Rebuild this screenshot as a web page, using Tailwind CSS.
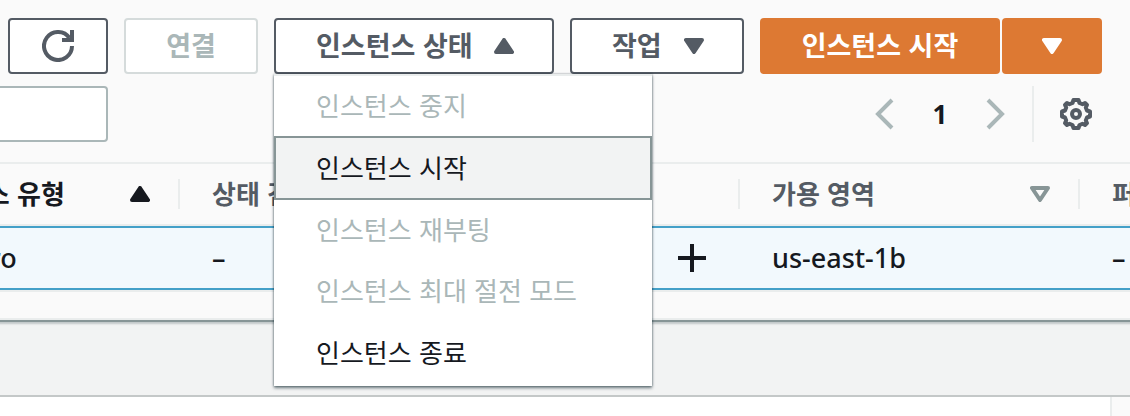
<!DOCTYPE html>
<html lang="ko">
<head>
<meta charset="utf-8">
<meta name="viewport" content="width=device-width, initial-scale=1">
<title>인스턴스</title>
<script src="https://cdn.jsdelivr.net/npm/@tailwindcss/browser@4"></script>
</head>
<body class="min-h-screen flex flex-col overflow-x-hidden bg-white font-['Noto_Sans_CJK_KR',sans-serif] text-[26px] leading-9 text-[#16191f]">
<main class="bg-[#fafafa] border-b-2 border-[#879596] shadow-[0_1px_2px_rgba(0,28,36,0.3)]">
  <div class="flex justify-end gap-4 pt-[18px] pr-7 text-[27px] font-bold text-[#545b64]">
    <button type="button" aria-label="새로 고침" class="flex h-14 w-[100px] shrink-0 items-center justify-center rounded-sm border-2 border-[#545b64] bg-white">
      <svg class="size-8" viewBox="0 0 32 32" fill="none" stroke="currentColor" stroke-width="4" aria-hidden="true"><path d="M30 16A14 14 0 1 1 27.500 8"/><path d="M30 0V10H20"/></svg>
    </button>
    <button type="button" disabled class="h-14 w-[134px] shrink-0 rounded-sm border-2 border-[#d5dbdb] bg-white pb-0.5 text-[#aab7b8]">연결</button>
    <div class="relative shrink-0">
      <button type="button" aria-haspopup="menu" aria-expanded="true" class="flex h-14 w-[280px] items-center justify-between rounded-sm border-2 border-[#545b64] bg-white pl-10 pr-[38px]">
        <span class="pb-0.5">인스턴스 상태</span>
        <svg class="h-4 w-5" viewBox="0 0 20 16" fill="currentColor" stroke="currentColor" stroke-width="4" stroke-linejoin="round" aria-hidden="true"><path d="M10 2L18 14H2Z"/></svg>
      </button>
      <div role="menu" class="absolute left-0 top-full z-10 flex w-[378px] flex-col border-t-2 border-[#eaeded] bg-white pb-0.5 text-[26px] font-normal text-[#16191f] shadow-[0_2px_3px_rgba(0,28,36,0.55),0_0_2px_rgba(0,28,36,0.4)]">
        <button type="button" role="menuitem" disabled class="h-[60px] px-[42px] pb-0.5 text-left text-[#aab7b8]">인스턴스 중지</button>
        <button type="button" role="menuitem" class="h-16 border-2 border-[#879596] bg-[#f2f3f3] px-10 pb-0.5 text-left">인스턴스 시작</button>
        <button type="button" role="menuitem" disabled class="h-[60px] px-[42px] pb-0.5 text-left text-[#aab7b8]">인스턴스 재부팅</button>
        <button type="button" role="menuitem" disabled class="h-[62px] px-[42px] pb-0.5 text-left text-[#aab7b8]">인스턴스 최대 절전 모드</button>
        <button type="button" role="menuitem" class="h-[62px] px-[42px] pb-0.5 text-left">인스턴스 종료</button>
      </div>
    </div>
    <button type="button" aria-haspopup="menu" class="flex h-14 w-[174px] shrink-0 items-center justify-between rounded-sm border-2 border-[#545b64] bg-white pl-10 pr-[38px]">
      <span class="pb-0.5">작업</span>
      <svg class="h-4 w-5" viewBox="0 0 20 16" fill="currentColor" stroke="currentColor" stroke-width="4" stroke-linejoin="round" aria-hidden="true"><path d="M2 2H18L10 14Z"/></svg>
    </button>
    <div class="flex shrink-0 gap-0.5 text-white">
      <button type="button" class="h-14 w-60 rounded-sm bg-[#dd7933] pb-0.5">인스턴스 시작</button>
      <button type="button" aria-label="시작 옵션" class="flex h-14 w-[100px] items-center justify-center rounded-sm bg-[#dd7933]">
        <svg class="h-4 w-5" viewBox="0 0 20 16" fill="currentColor" stroke="currentColor" stroke-width="4" stroke-linejoin="round" aria-hidden="true"><path d="M2 2H18L10 14Z"/></svg>
      </button>
    </div>
  </div>

  <div class="flex items-center justify-between pt-3 pb-5 pr-[38px]">
    <input type="text" aria-label="인스턴스 필터링" class="-ml-2 h-14 w-[116px] rounded-sm border-2 border-[#aab7b8] bg-white px-4">
    <nav aria-label="페이지" class="flex items-center">
      <button type="button" aria-label="이전 페이지" class="text-[#aab7b8]">
        <svg class="h-8 w-5" viewBox="0 0 20 32" fill="none" stroke="currentColor" stroke-width="4" aria-hidden="true"><path d="M18 2L4 16L18 30"/></svg>
      </button>
      <button type="button" aria-current="page" class="w-[92px] font-['Open_Sans',sans-serif] font-bold">1</button>
      <button type="button" aria-label="다음 페이지" class="text-[#aab7b8]">
        <svg class="h-8 w-5" viewBox="0 0 20 32" fill="none" stroke="currentColor" stroke-width="4" aria-hidden="true"><path d="M2 2L16 16L2 30"/></svg>
      </button>
      <div class="ml-[26px] flex h-14 items-center border-l-2 border-[#eaeded] pl-[26px]">
        <button type="button" aria-label="기본 설정" class="text-[#545b64]">
          <svg class="size-8" viewBox="0 0 32 32" fill="none" stroke="currentColor" stroke-width="4" aria-hidden="true"><path stroke-linejoin="round" d="M13.500 2H18.500L19.500 5L22.500 6.200L25 5L27 7L25.800 9.500L27 12.500L30 13.500V18.500L27 19.500L25.800 22.500L27 25L25 27L22.500 25.800L19.500 27L18.500 30H13.500L12.500 27L9.500 25.800L7 27L5 25L6.200 22.500L5 19.500L2 18.500V13.500L5 12.500L6.200 9.500L5 7L7 5L9.500 6.200L12.500 5Z"/><circle cx="16" cy="16" r="4"/></svg>
        </button>
      </div>
    </nav>
  </div>

  <div class="overflow-hidden border-y-2 border-[#eaeded]">
    <table class="-ml-[118px] w-[calc(100%+218px)] table-fixed border-separate border-spacing-0 text-left">
      <colgroup><col class="w-[298px]"><col class="w-[560px]"><col class="w-[340px]"><col></colgroup>
      <thead class="text-[#545b64]">
        <tr>
          <th scope="col" aria-sort="ascending" class="h-[62px] border-b-2 border-[#eaeded] p-0 font-bold text-[#16191f]">
            <div class="flex h-[30px] items-center justify-between border-r-2 border-[#eaeded] pl-8 pr-7"><span class="pb-0.5">인스턴스 유형</span>
              <svg class="h-4 w-5" viewBox="0 0 20 16" fill="currentColor" stroke="currentColor" stroke-width="4" stroke-linejoin="round" aria-hidden="true"><path d="M10 2L18 14H2Z"/></svg>
            </div>
          </th>
          <th scope="col" class="border-b-2 border-[#eaeded] p-0 font-bold"><div class="flex h-[30px] items-center border-r-2 border-[#eaeded] pl-8"><span class="pb-0.5">상태 검사</span></div></th>
          <th scope="col" class="border-b-2 border-[#eaeded] p-0 font-bold">
            <div class="flex h-[30px] items-center justify-between border-r-2 border-[#eaeded] pl-8 pr-7"><span class="pb-0.5">가용 영역</span>
              <svg class="h-4 w-5 text-[#879596]" viewBox="0 0 20 16" fill="none" stroke="currentColor" stroke-width="4" stroke-linejoin="round" aria-hidden="true"><path d="M2 2H18L10 14Z"/></svg>
            </div>
          </th>
          <th scope="col" class="border-b-2 border-[#eaeded] p-0 font-bold"><div class="flex h-[30px] items-center whitespace-nowrap pl-8"><span class="pb-0.5">퍼블릭 IPv4</span></div></th>
        </tr>
      </thead>
      <tbody class="font-['Noto_Sans',sans-serif] text-[27px] font-medium">
        <tr class="bg-[#f2f9fd]">
          <td class="h-16 border-y-2 border-[#44a0c8] p-0 pl-7">t2.micro</td>
          <td class="border-y-2 border-[#44a0c8] p-0 pl-8">
            <div class="flex items-center justify-between pr-[34px]">–
              <button type="button" aria-label="경보 추가"><svg class="size-7" viewBox="0 0 28 28" fill="none" stroke="currentColor" stroke-width="4" aria-hidden="true"><path d="M14 0V28M0 14H28"/></svg></button>
            </div>
          </td>
          <td class="border-y-2 border-[#44a0c8] p-0 pl-8">us-east-1b</td>
          <td class="border-y-2 border-[#44a0c8] p-0 pl-8">–</td>
        </tr>
      </tbody>
    </table>
    <div class="h-7 border-t-2 border-[#eaeded]"></div>
  </div>
</main>
<div class="h-[75px] border-b-2 border-[#c4c8c8] bg-[#f2f3f3] shadow-[inset_0_4px_2px_-2px_rgba(0,28,36,0.2)]"></div>
<section aria-label="세부 정보" class="flex min-h-5 flex-1">
  <div class="flex-1 bg-white"></div>
  <div class="w-5 border-l-2 border-[#eaeded] bg-[#fafafa]"></div>
</section>
</body>
</html>
